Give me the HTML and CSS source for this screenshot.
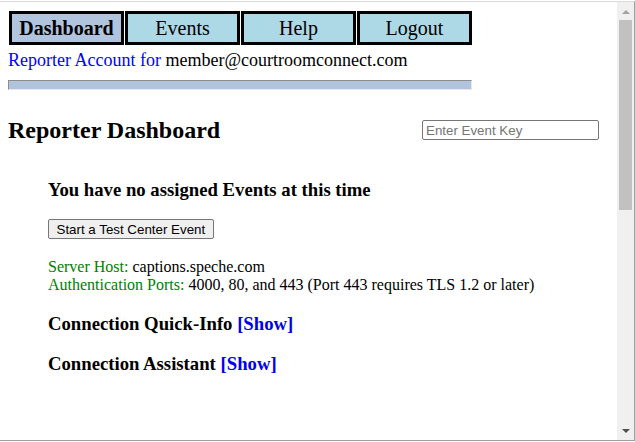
FILE: index.html
```html
<!DOCTYPE html>
<html>
<head>
<meta charset="utf-8">
<title>Reporter Dashboard</title>
<link rel="stylesheet" href="styles.css">
</head>
<body>
<div class="window">
  <div class="viewport">
    <div class="nav">
      <div class="nav-item active">Dashboard</div>
      <div class="nav-item">Events</div>
      <div class="nav-item">Help</div>
      <div class="nav-item">Logout</div>
    </div>
    <div class="account"><span class="label">Reporter Account for</span> member@courtroomconnect.com</div>
    <div class="bar"></div>
    <div class="title-row">
      <h2 class="title">Reporter Dashboard</h2>
      <input class="event-key" type="text" placeholder="Enter Event Key">
    </div>
    <div class="content">
      <h3 class="section">You have no assigned Events at this time</h3>
      <button class="test-btn">Start a Test Center Event</button>
      <div class="info">
        <div><span class="key">Server Host:</span> captions.speche.com</div>
        <div><span class="key">Authentication Ports:</span> 4000, 80, and 443 (Port 443 requires TLS 1.2 or later)</div>
      </div>
      <h3 class="section quick">Connection Quick-Info <a class="show" href="#">[Show]</a></h3>
      <h3 class="section assist">Connection Assistant <a class="show" href="#">[Show]</a></h3>
    </div>
  </div>
  <div class="scrollbar">
    <div class="arrow up"></div>
    <div class="thumb"></div>
    <div class="track"></div>
    <div class="arrow down"></div>
  </div>
</div>
</body>
</html>
```

FILE: styles.css
```css
html, body {
  margin: 0;
  padding: 0;
  background: #ffffff;
}
body {
  padding-top: 1px;
  font-family: "Liberation Serif", "Times New Roman", serif;
  font-size: 16px;
  color: #000;
}
.window {
  display: flex;
  height: 440px;
  box-sizing: border-box;
  border-top: 1px solid #dadada;
  border-bottom: 1px solid #a0a0a0;
  border-right: 1px solid #a0a0a0;
  width: 635px;
  overflow: hidden;
}
.viewport {
  flex: 1;
  padding: 9px 8px 0 8px;
  overflow: hidden;
}
.nav {
  display: flex;
  gap: 1px;
  margin-left: 1px;
}
.nav-item {
  width: 115px;
  height: 34px;
  box-sizing: border-box;
  border: 3px solid #000;
  background: #add8e6;
  font-size: 20px;
  line-height: 28px;
  text-align: center;
}
.nav-item.active {
  background: #b0c4de;
  font-weight: bold;
}
.account {
  font-size: 18px;
  margin-top: 5px;
  line-height: 21px;
}
.account .label {
  color: #0000ff;
}
.bar {
  width: 464px;
  height: 10px;
  box-sizing: border-box;
  margin-top: 9px;
  background: #b0c4de;
  border-top: 1px solid #8c8c8c;
  border-left: 1px solid #8c8c8c;
  border-bottom: 1px solid #e8e8e8;
  border-right: 1px solid #e8e8e8;
}
.title-row {
  display: flex;
  align-items: center;
  justify-content: space-between;
  margin-top: 26px;
  padding-right: 10px;
}
.title {
  margin: 0;
  font-size: 24px;
  font-weight: bold;
  line-height: 28px;
}
.event-key {
  width: 177px;
  height: 20px;
  box-sizing: border-box;
  border: 1px solid #767676;
  border-radius: 2px;
  padding: 1px 3px;
  font-family: "Liberation Sans", Arial, sans-serif;
  font-size: 13.33px;
}
.event-key::placeholder {
  color: #757575;
}
.content {
  padding-left: 40px;
}
.section {
  margin: 0;
  font-size: 18.72px;
  font-weight: bold;
  line-height: 22px;
}
.content > .section:first-child {
  margin-top: 35px;
}
.test-btn {
  display: block;
  margin-top: 18px;
  height: 20px;
  padding: 1px 7.5px;
  font-family: "Liberation Sans", Arial, sans-serif;
  font-size: 13.33px;
  background: #efefef;
  border: 1px solid #767676;
  border-radius: 2px;
  color: #000;
}
.info {
  margin-top: 19px;
  line-height: 18px;
}
.key {
  color: #008000;
}
.quick {
  margin-top: 19px;
}
.assist {
  margin-top: 18px;
}
.show {
  color: #0000ee;
  text-decoration: none;
}
.scrollbar {
  width: 17px;
  display: flex;
  flex-direction: column;
  align-items: center;
  background: #f0f0f0;
}
.arrow {
  width: 0;
  height: 0;
  border-left: 4px solid transparent;
  border-right: 4px solid transparent;
}
.arrow.up {
  margin-top: 8px;
  margin-bottom: 6px;
  border-bottom: 4px solid #a3a3a3;
}
.arrow.down {
  margin-bottom: 7px;
  margin-top: 6px;
  border-top: 4px solid #505050;
}
.thumb {
  width: 13px;
  height: 190px;
  background: #c1c1c1;
}
.track {
  flex: 1;
}
```
